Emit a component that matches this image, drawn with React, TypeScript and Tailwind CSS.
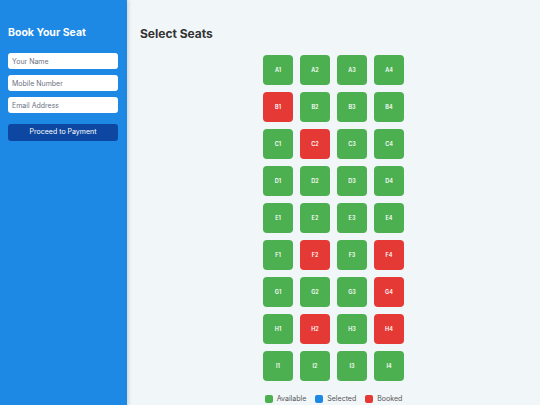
const rows = ["A", "B", "C", "D", "E", "F", "G", "H", "I"]
const booked = ["B1", "C2", "F2", "F4", "G4", "H2", "H4"]

export default function App() {
  return (
    <div className="flex h-[405px] w-[540px] overflow-hidden bg-[#f1f6f9] font-['Inter','Liberation_Sans',sans-serif]">
      {/* Sidebar */}
      <aside className="w-[127px] shrink-0 bg-[#1e88e5] px-[8px] pt-[26px] shadow-[2px_0_3px_rgba(0,0,0,0.12)]">
        <h2 className="text-[10.5px] font-bold leading-[13px] text-white">Book Your Seat</h2>
        <div className="mt-[14px] flex flex-col gap-[6px]">
          <input className="h-[16px] w-[110px] rounded-[3px] bg-white px-[4px] text-[7px] text-gray-700 outline-none placeholder:text-gray-500" placeholder="Your Name" />
          <input className="h-[16px] w-[110px] rounded-[3px] bg-white px-[4px] text-[7px] text-gray-700 outline-none placeholder:text-gray-500" placeholder="Mobile Number" />
          <input className="h-[16px] w-[110px] rounded-[3px] bg-white px-[4px] text-[7px] text-gray-700 outline-none placeholder:text-gray-500" placeholder="Email Address" />
        </div>
        <button className="mt-[11px] h-[17px] w-[110px] rounded-[3px] bg-[#0d47a1] text-[7px] text-white">
          Proceed to Payment
        </button>
      </aside>

      {/* Main */}
      <main className="flex-1 px-[13px] pt-[26px]">
        <h1 className="text-[12px] font-bold leading-[15px] text-[#333]">Select Seats</h1>
        <div className="mt-[14px] flex flex-col items-center">
          <div className="grid grid-cols-4 gap-[7px]">
            {rows.map((r) =>
              [1, 2, 3, 4].map((n) => {
                const id = `${r}${n}`
                const isBooked = booked.includes(id)
                return (
                  <div
                    key={id}
                    className={`flex h-[30px] w-[30px] items-center justify-center rounded-[4px] text-[5.5px] font-semibold text-white ${isBooked ? "bg-[#e53935]" : "bg-[#4caf50]"}`}
                  >
                    {id}
                  </div>
                )
              })
            )}
          </div>
          <div className="mt-[13px] flex items-center gap-[9px] text-[7px] text-[#555]">
            <div className="flex items-center gap-[4px]">
              <span className="h-[8px] w-[8px] rounded-[2px] bg-[#4caf50]" />
              Available
            </div>
            <div className="flex items-center gap-[4px]">
              <span className="h-[8px] w-[8px] rounded-[2px] bg-[#1e88e5]" />
              Selected
            </div>
            <div className="flex items-center gap-[4px]">
              <span className="h-[8px] w-[8px] rounded-[2px] bg-[#e53935]" />
              Booked
            </div>
          </div>
        </div>
      </main>
    </div>
  )
}
